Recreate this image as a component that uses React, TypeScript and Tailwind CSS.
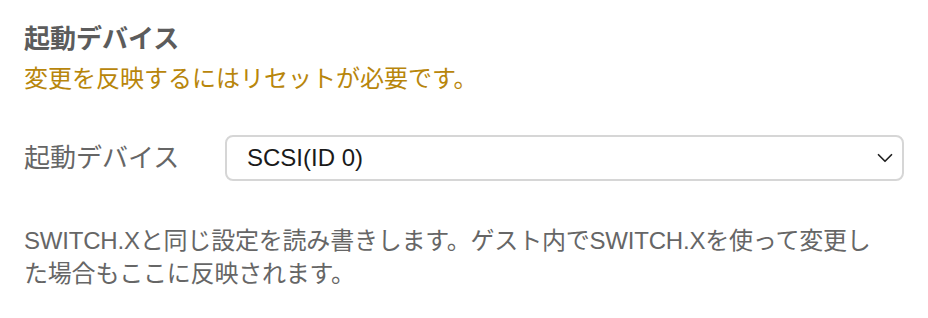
import { ChevronDown } from 'lucide-react';

const font = { fontFamily: '"Liberation Sans", "Noto Sans CJK JP", sans-serif' };

export default function App() {
  return (
    <div className="min-h-[318px] w-[928px] bg-white px-6 pt-[24px]" style={font}>
      <h2 className="text-[26px] font-bold leading-[30px] text-[#5c5c5c]">起動デバイス</h2>
      <p className="mt-[10px] text-[24px] leading-[30px] text-[#b8860b]">変更を反映するにはリセットが必要です。</p>

      <div className="mt-[41px] flex items-center">
        <label className="w-[201px] shrink-0 text-[26px] text-[#666666]">起動デバイス</label>
        <div className="relative h-[46px] w-[679px]">
          <select
            defaultValue="0"
            className="h-full w-full appearance-none rounded-lg border-2 border-[#d6d6d6] bg-white pl-[20px] pr-10 text-[24px] text-[#1a1a1a] outline-none"
          >
            <option value="0">SCSI(ID 0)</option>
          </select>
          <ChevronDown className="pointer-events-none absolute right-[6px] top-1/2 h-[26px] w-[26px] -translate-y-1/2 text-[#222]" strokeWidth={1.6} />
        </div>
      </div>

      <p className="mt-[43px] w-[880px] text-[24px] leading-[33px] tracking-[-0.2px] text-[#666666]">
        SWITCH.Xと同じ設定を読み書きします。ゲスト内でSWITCH.Xを使って変更し
        <br />
        た場合もここに反映されます。
      </p>
    </div>
  );
}
